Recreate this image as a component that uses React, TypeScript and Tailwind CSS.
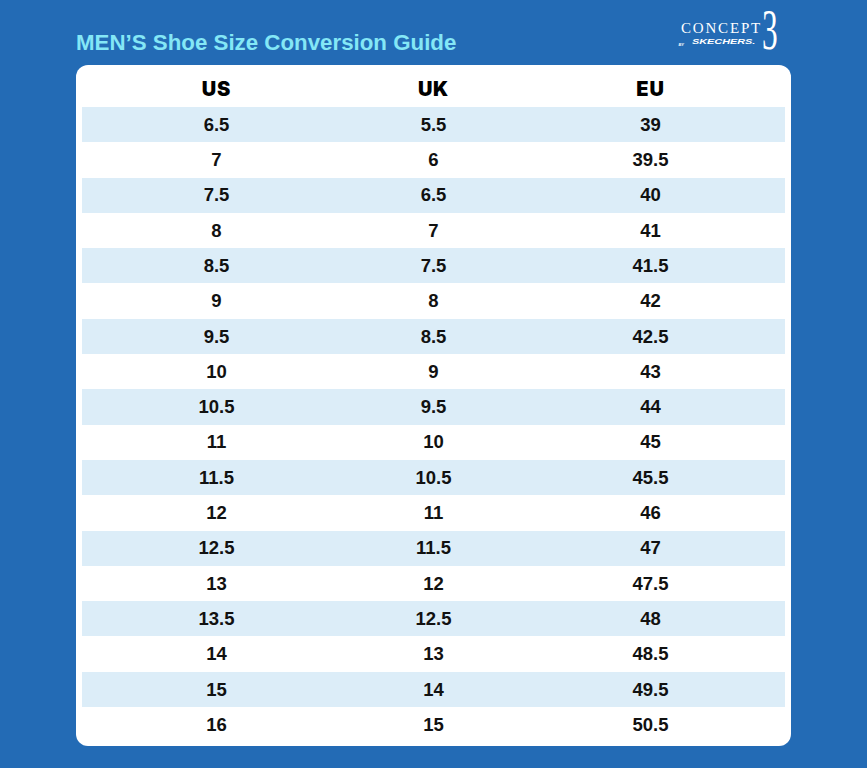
const rows: [string, string, string][] = [
  ["6.5", "5.5", "39"],
  ["7", "6", "39.5"],
  ["7.5", "6.5", "40"],
  ["8", "7", "41"],
  ["8.5", "7.5", "41.5"],
  ["9", "8", "42"],
  ["9.5", "8.5", "42.5"],
  ["10", "9", "43"],
  ["10.5", "9.5", "44"],
  ["11", "10", "45"],
  ["11.5", "10.5", "45.5"],
  ["12", "11", "46"],
  ["12.5", "11.5", "47"],
  ["13", "12", "47.5"],
  ["13.5", "12.5", "48"],
  ["14", "13", "48.5"],
  ["15", "14", "49.5"],
  ["16", "15", "50.5"],
];

// Concept 3 by Skechers wordmark
function Logo() {
  return (
    <div className="flex items-start text-white">
      <div className="flex flex-col items-end pt-[21px]">
        <span className="h-[15px] font-['Liberation_Serif',serif] text-[15px] leading-none tracking-[0.12em]">
          CONCEPT
        </span>
        <span className="mt-[3px] flex h-[8px] items-end pr-[6px] leading-none">
          <span className="mr-[8px] text-[4px] font-bold italic">BY</span>
          <span className="inline-block w-[64px]">
            <span className="inline-block origin-left scale-x-[1.55] font-['Liberation_Sans',sans-serif] text-[7px] font-bold italic">
              SKECHERS.
            </span>
          </span>
        </span>
      </div>
      <span className="mt-[2px] inline-block h-[56px] w-[16px]">
        <span className="inline-block origin-left scale-x-[0.56] font-['Liberation_Serif',serif] text-[56px] leading-none">
          3
        </span>
      </span>
    </div>
  );
}

export default function App() {
  return (
    <div className="h-[768px] w-[867px] bg-[#236bb5] font-['Liberation_Sans',sans-serif]">
      <div className="flex h-[65px] items-start justify-between pl-[76px] pr-[89px]">
        <h1 className="pt-[32px] text-[22.3px] font-bold leading-none text-[#84e7f6]">
          MEN’S Shoe Size Conversion Guide
        </h1>
        <Logo />
      </div>
      <div className="ml-[76px] w-[715px] rounded-[12px] bg-white px-[6px] pb-[4px]">
        <div className="grid h-[42px] grid-cols-[217px_217px_217px] items-center justify-center font-['Inter',sans-serif] text-[20px] font-black tracking-[0.04em] text-black">
          <span className="pt-[6px] text-center">US</span>
          <span className="pt-[6px] text-center">UK</span>
          <span className="pt-[6px] text-center">EU</span>
        </div>
        {rows.map((row, i) => (
          <div
            key={row[0]}
            className={[
              "grid h-[35.3px] grid-cols-[217px_217px_217px] items-center justify-center text-[18.5px] font-bold text-[#111]",
              i % 2 === 0 ? "bg-[#dcedf8]" : "bg-white",
            ].join(" ")}
          >
            {row.map((v, j) => (
              <span key={j} className="text-center">
                {v}
              </span>
            ))}
          </div>
        ))}
      </div>
    </div>
  );
}
